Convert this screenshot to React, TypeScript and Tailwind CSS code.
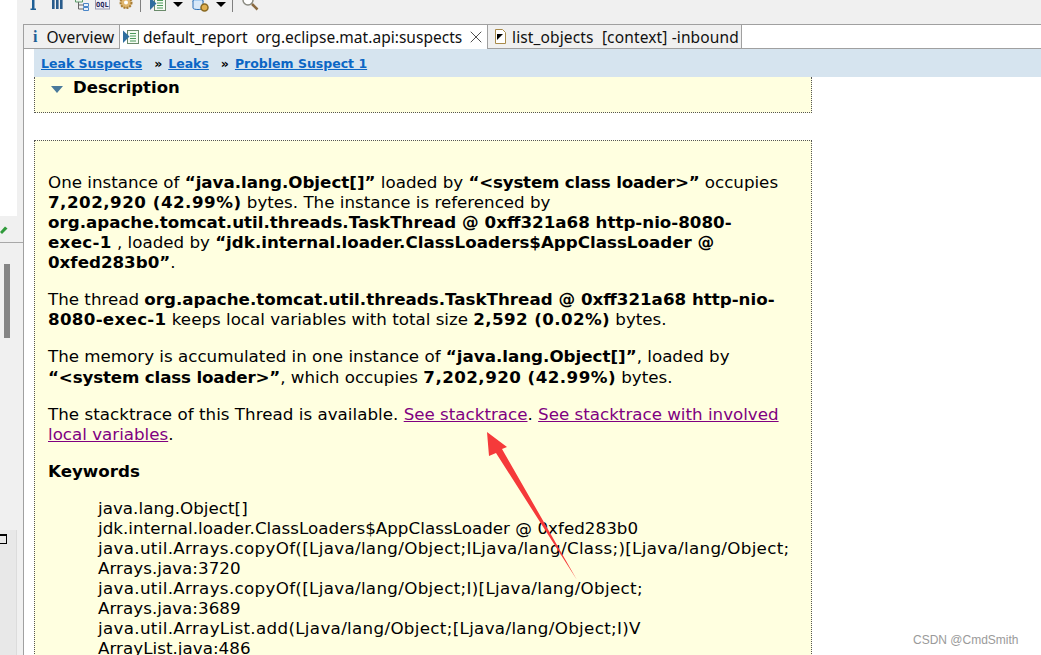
import { X } from "lucide-react";

const code = [
  "java.lang.Object[]",
  "jdk.internal.loader.ClassLoaders$AppClassLoader @ 0xfed283b0",
  "java.util.Arrays.copyOf([Ljava/lang/Object;ILjava/lang/Class;)[Ljava/lang/Object;",
  "Arrays.java:3720",
  "java.util.Arrays.copyOf([Ljava/lang/Object;I)[Ljava/lang/Object;",
  "Arrays.java:3689",
  "java.util.ArrayList.add(Ljava/lang/Object;[Ljava/lang/Object;I)V",
  "ArrayList.java:486",
];

function ReportIcon() {
  return (
    <svg width="16" height="16" viewBox="0 0 16 16" className="shrink-0">
      <rect x="4.500" y="1.500" width="11" height="13" fill="#f4fbf2" stroke="#6a8a6a" />
      <path d="M7 4.500h6M7 7h6M7 9.500h6M7 12h6" stroke="#4a9a5a" />
      <path d="M0 1.500 L6.500 7.500 L0 14 Z" fill="#2f6f9f" />
    </svg>
  );
}

function DropCaret({ className }: { className: string }) {
  return <div className={`mt-[2px] h-0 w-0 border-x-[5px] border-t-[5px] border-x-transparent border-t-black ${className}`} />;
}

function ToolSeparator({ className }: { className: string }) {
  return <div className={`h-[12px] w-px bg-[#808080] ${className}`} />;
}

function Toolbar() {
  return (
    <div className="flex h-6 shrink-0 items-start overflow-hidden bg-[#f0f0f0]">
      <svg width="108" height="16" viewBox="0 0 108 16" className="ml-[7px] shrink-0">
        {/* info */}
        <path d="M1.500 -2h3v10.500h1.500v1.500h-5.500v-1.500h1.500V-0.500h-1.500Z" fill="#1e5f96" />
        {/* columns */}
        <path d="M22 -2h2.600v11H22zM26 -2h2.600v11H26zM30 -2h2.600v11H30z" fill="#2a5c8c" />
        {/* tree */}
        <path d="M45.500 -2h7v4h-7z" fill="#eaf4ea" stroke="#5b9c6a" />
        <path d="M53.500 3.500h5v3h-5zM53.500 7.500h5v3h-5z" fill="#eaf2fb" stroke="#4a86c8" />
        <path d="M48.500 2v7h5M48.500 5h5" fill="none" stroke="#666" />
        {/* oql */}
        <rect x="65.500" y="-2" width="14" height="11" fill="#f0f0f8" stroke="#9a9ab0" />
        <text x="66" y="6.500" fontSize="7" fontWeight="700" fill="#26265a" fontFamily="DejaVu Sans Mono">OQL</text>
        {/* gears */}
        <circle cx="96" cy="2.500" r="5.500" fill="#e0b66e" stroke="#a87c33" strokeWidth="2" strokeDasharray="2 1" />
        <circle cx="96" cy="2.500" r="2" fill="#fff" />
      </svg>
    </div>
  );
}

function TopTools() {
  return (
    <div className="absolute left-[140px] top-0 flex items-start">
      <ToolSeparator className="" />
      <div className="-mt-[4px] ml-[9px]"><ReportIcon /></div>
      <DropCaret className="ml-[7px]" />
      <svg width="19" height="14" viewBox="0 0 19 14" className="ml-[9px] shrink-0">
        <ellipse cx="6" cy="1" rx="5" ry="2.500" fill="#a8cdf0" stroke="#2c6fb5" />
        <path d="M1 1v7c0 2 10 2 10 0V1" fill="#d8e8f8" stroke="#2c6fb5" />
        <circle cx="12.500" cy="7.500" r="3.500" fill="#e0b050" stroke="#8a6a22" strokeWidth="1.500" />
      </svg>
      <DropCaret className="ml-[5px]" />
      <ToolSeparator className="ml-[6px]" />
      <svg width="17" height="12" viewBox="0 0 17 12" className="ml-[9px] shrink-0">
        <circle cx="6" cy="0" r="5" fill="#fff" stroke="#8a8a80" strokeWidth="1.500" />
        <path d="M10 4L15.500 9.500" stroke="#8a6a40" strokeWidth="2.500" />
      </svg>
    </div>
  );
}

function TabBar() {
  return (
    <div className="flex h-[25px] shrink-0 items-stretch border-t border-[#a0a0a0] font-['Noto_Sans',sans-serif] text-[15.500px] leading-[22px] text-[#111]">
      <div className="flex w-[96px] shrink-0 items-center gap-[9px] border-r border-b border-[#a0a0a0] bg-[#f0f0f0] pl-[9px]">
        <span className="font-['Liberation_Serif',serif] text-[16px] font-bold text-[#1e5f96]">i</span>
        <span>Overview</span>
      </div>
      <div className="flex w-[367px] shrink-0 items-center gap-[4px] bg-white pl-[3px]">
        <ReportIcon />
        <span className="whitespace-pre tracking-[0.03px]">default_report  org.eclipse.mat.api:suspects</span>
        <X size={20} strokeWidth={0.900} className="shrink-0 text-[#111]" />
      </div>
      <div className="flex w-[255px] shrink-0 items-center gap-[6px] border-x border-b border-[#a0a0a0] bg-[#f0f0f0] pl-[7px]">
        <svg width="11" height="15" viewBox="0 0 11 15" className="shrink-0">
          <path d="M0.500 0.500H7.500L10.500 3.500V14.500H0.500Z" fill="#fff" stroke="#a88a4a" />
          <path d="M2 5H8L2 11Z" fill="#000" />
        </svg>
        <span className="whitespace-pre tracking-[0.13px]">list_objects  [context] -inbound</span>
      </div>
      <div className="flex-1 border-b border-[#a0a0a0]" />
    </div>
  );
}

function Arrow() {
  return (
    <svg width="100" height="155" viewBox="480 428 100 155" className="absolute left-[480px] top-[428px]">
      <path d="M487 432 L507 447 L502 449 L577 580 L496 453 L489 456 Z" fill="#f53a3a" />
    </svg>
  );
}

export default function App() {
  return (
    <div className="relative flex h-[655px] w-[1041px] overflow-hidden bg-white font-['DejaVu_Sans',sans-serif] text-[16.700px] leading-[20.100px] text-black">
      <div className="flex w-[23px] shrink-0 flex-col">
        <div className="h-[216px] shrink-0 border-r-[6px] border-r-[#f0f0f0] bg-white" />
        <div className="flex h-[26px] shrink-0 items-center bg-[#f0f0f0]">
          <svg width="8" height="9" viewBox="0 0 8 9" className="shrink-0">
            <path d="M0 7L5 1.500L7.500 3.500L2 9Z" fill="#2f9a3a" />
          </svg>
        </div>
        <div className="h-[284px] shrink-0 border-t border-[#a8a8a8] bg-[#f0f0f0] pt-[21px] pl-[4px]">
          <div className="h-[74px] w-[6px] bg-[#858585]" />
        </div>
        <div className="flex-1 bg-[#f0f0f0]">
          <div className="mt-[4px] h-full w-[17px] border-r border-[#dcdcdc] bg-[#e8e8e8] pt-[4px]">
            <div className="h-[10px] w-[7px] border border-l-0 border-t-2 border-black" />
          </div>
        </div>
      </div>
      <div className="flex min-w-0 flex-1 flex-col">
        <Toolbar />
        <div className="flex min-h-0 flex-1 flex-col border-l border-[#a0a0a0]">
          <TabBar />
          <div className="min-h-0 flex-1 pl-[10px]">
            <div className="flex h-[28px] items-center gap-[12px] bg-[#d6e4ef] pl-[7px] pt-[2px] text-[12.500px] font-bold text-[#0b66c5]">
              <a className="underline">Leak Suspects</a>
              <span className="flex items-center gap-[6px]">
                <span className="text-black">»</span>
                <a className="underline">Leaks</a>
              </span>
              <span className="flex items-center gap-[6px]">
                <span className="text-black">»</span>
                <a className="underline">Problem Suspect 1</a>
              </span>
            </div>
            <div className="w-[778px]">
              <div className="h-[36px] border-x border-b border-dotted border-[#555] bg-[#ffffe0] pl-[16px] pt-px">
                <div className="flex items-center gap-[10px] text-[16.500px] font-bold leading-[20px]">
                  <div className="mt-[3px] h-0 w-0 border-x-[6px] border-t-[7px] border-x-transparent border-t-[#4a7a9c]" />
                  <span>Description</span>
                </div>
              </div>
              <div className="mt-[27px] h-[600px] border border-dotted border-[#555] bg-[#ffffe0] pt-[31px] pl-[13px] pr-[31px]">
                <p>
                  One instance of <b>“java.lang.Object[]”</b> loaded by <b className="tracking-[-0.2px]">“&lt;system class loader&gt;”</b> occupies <b className="tracking-[0.5px]">7,202,920 (42.99%)</b> bytes. The instance is referenced by <b>org.apache.tomcat.util.threads.TaskThread @ 0xff321a68 http-nio-8080-<span className="tracking-[0.3px]">exec-1</span></b> , loaded by <b>“jdk.internal.loader.ClassLoaders$AppClassLoader @ 0xfed283b0”</b>.
                </p>
                <p className="mt-[16.900px]">
                  The thread <b>org.apache.tomcat.util.threads.TaskThread @ 0xff321a68 http-nio-<span className="tracking-[0.3px]">8080-exec-1</span></b> keeps local variables with total size <b className="tracking-[0.38px]">2,592 (0.02%)</b> bytes.
                </p>
                <p className="mt-[16.900px]">
                  The memory is accumulated in one instance of <b>“java.lang.Object[]”</b>, loaded by <b className="tracking-[-0.15px]">“&lt;system class loader&gt;”</b>, which occupies <b className="tracking-[0.45px]">7,202,920 (42.99%)</b> bytes.
                </p>
                <p className="mt-[16.900px]">
                  <span className="tracking-[0.03px]">The stacktrace of this Thread is available.</span> <a className="text-[#800080] underline">See stacktrace</a>. <a className="text-[#800080] underline">See stacktrace with involved local variables</a>.
                </p>
                <p className="mt-[16.900px] font-bold">Keywords</p>
                <div className="mt-[16.900px] whitespace-nowrap pl-[50px]">
                  {code.map((c) => (
                    <div key={c} className={c.includes("/") ? "tracking-[0.33px]" : "tracking-[0.04px]"}>
                      {c}
                    </div>
                  ))}
                </div>
              </div>
            </div>
          </div>
        </div>
      </div>
      <TopTools />
      <Arrow />
      <div className="absolute left-[913px] top-[632px] font-['Liberation_Sans',sans-serif] text-[12px] leading-[16px] text-[#9a9a9a]">CSDN @CmdSmith</div>
    </div>
  );
}
